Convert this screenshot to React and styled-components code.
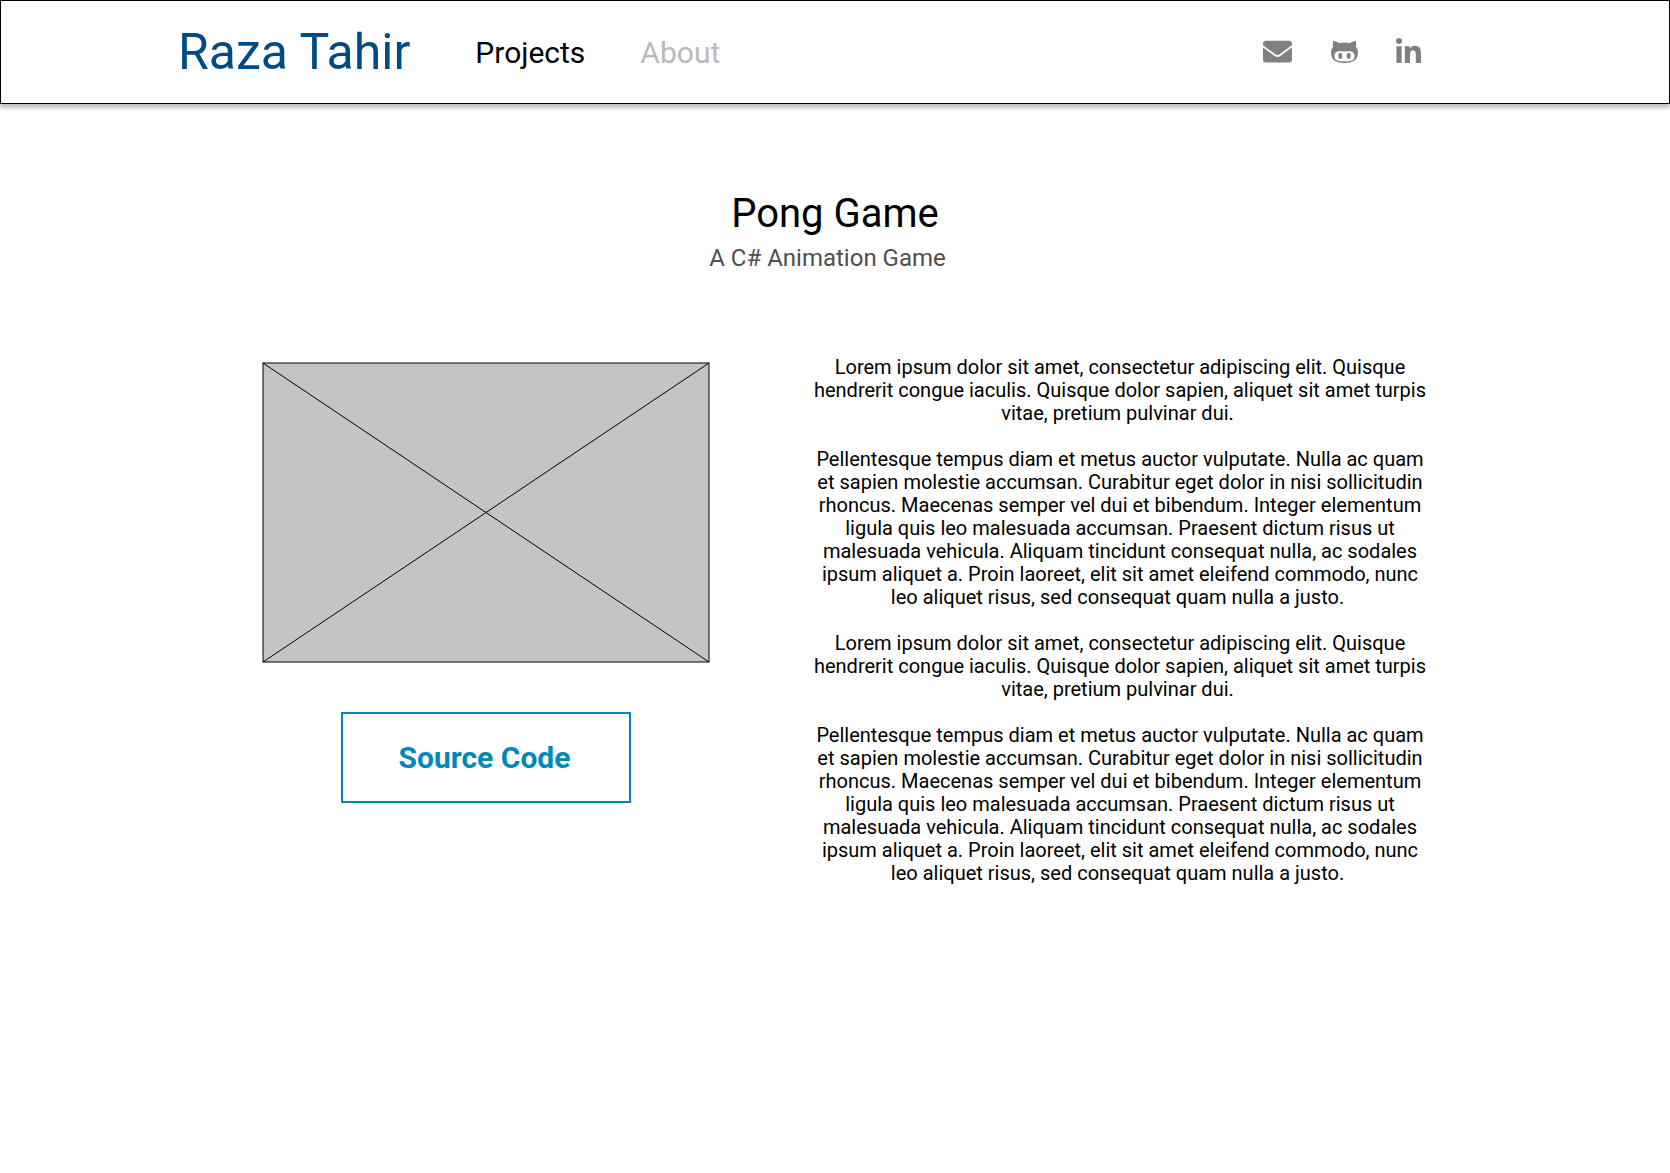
import React from "react";
import styled, { createGlobalStyle } from "styled-components";
import { FaEnvelope, FaLinkedinIn } from "react-icons/fa";

const GlobalStyle = createGlobalStyle`
  *, *::before, *::after { box-sizing: border-box; }
  body {
    margin: 0;
    background: #fff;
    color: #000;
    font-family: Roboto, "Liberation Sans", sans-serif;
  }
`;

const Page = styled.div`
  min-height: 1173px;
  background: #fff;
`;

const Header = styled.header`
  display: flex;
  align-items: center;
  height: 104px;
  padding: 0 246px 0 177px;
  border: 1px solid #000;
  background: #fff;
  box-shadow: 0 4px 4px rgba(0, 0, 0, 0.25);
`;

const Brand = styled.a`
  font-size: 50px;
  line-height: 59px;
  color: #004b84;
  white-space: nowrap;
`;

const Nav = styled.nav`
  display: flex;
  gap: 55px;
  margin-left: 65px;
`;

const NavLink = styled.a`
  font-size: 30px;
  line-height: 35px;
  color: ${({ $active }) => ($active ? "#000" : "#bababa")};
`;

const Social = styled.div`
  display: flex;
  align-items: flex-start;
  gap: 36px;
  height: 30px;
  margin-left: auto;
  color: #808080;
`;

const SocialLink = styled.a`
  display: flex;
  margin-top: ${({ $top = 0 }) => $top}px;
  svg {
    display: block;
    width: ${({ $w }) => $w}px;
    height: ${({ $h }) => $h}px;
  }
  &:first-child {
    margin-right: 3px;
  }
`;

const Intro = styled.section`
  display: flex;
  flex-direction: column;
  align-items: center;
  padding-top: 86px;
`;

const Title = styled.h1`
  margin: 0;
  font-size: 40px;
  font-weight: 400;
  line-height: 47px;
`;

const Subtitle = styled.p`
  margin: 7px 15px 0 0;
  font-size: 24px;
  line-height: 28px;
  color: #4f4f4f;
`;

const Content = styled.main`
  display: flex;
  align-items: flex-start;
  gap: 101px;
  padding: 84px 0 0 262px;
`;

const Media = styled.div`
  display: flex;
  flex-direction: column;
  align-items: center;
  gap: 49px;
  width: 448px;
  padding-top: 6px;
`;

const Placeholder = styled.svg`
  display: block;
  width: 448px;
  height: 301px;
`;

const SourceButton = styled.button`
  width: 290px;
  height: 91px;
  padding: 0 3px 0 0;
  border: 2px solid #0089b7;
  background: #fff;
  color: #0089b7;
  font: 700 30px/35px Roboto, "Liberation Sans", sans-serif;
`;

const Description = styled.div`
  width: 618px;
  font-size: 20px;
  line-height: 23px;
  text-align: center;
`;

const Paragraph = styled.p`
  margin: 0 0 23px;
`;

const Octoface = () => (
  <svg viewBox="0 2 16 13" preserveAspectRatio="none" fill="currentColor">
    <path
      fillRule="evenodd"
      d="M14.7 5.34c.13-.32.55-1.59-.13-3.31 0 0-1.05-.33-3.44 1.3-1-.28-2.07-.32-3.13-.32s-2.13.04-3.13.32c-2.39-1.64-3.44-1.3-3.44-1.3-.68 1.72-.26 2.99-.13 3.31C.49 6.21 0 7.33 0 8.69 0 13.84 3.33 15 7.98 15S16 13.84 16 8.69c0-1.36-.49-2.48-1.3-3.35zM8 14.02c-3.3 0-5.98-.15-5.98-3.35 0-.76.38-1.48 1.02-2.07 1.07-.98 2.9-.46 4.96-.46 2.07 0 3.88-.52 4.96.46.65.59 1.02 1.3 1.02 2.07 0 3.19-2.68 3.35-5.98 3.35zM5.49 9.01c-.66 0-1.2.8-1.2 1.78s.54 1.79 1.2 1.79c.66 0 1.2-.8 1.2-1.79s-.54-1.78-1.2-1.78zm5.02 0c-.66 0-1.2.79-1.2 1.78s.54 1.79 1.2 1.79c.66 0 1.2-.8 1.2-1.79s-.53-1.78-1.2-1.78z"
    />
  </svg>
);

const shortText =
  "Lorem ipsum dolor sit amet, consectetur adipiscing elit. Quisque hendrerit congue iaculis. Quisque dolor sapien, aliquet sit amet turpis vitae, pretium pulvinar dui.\u00a0";
const longText =
  "Pellentesque tempus diam et metus auctor vulputate. Nulla ac quam et sapien molestie accumsan. Curabitur eget dolor in nisi sollicitudin rhoncus. Maecenas semper vel dui et bibendum. Integer elementum ligula quis leo malesuada accumsan. Praesent dictum risus ut malesuada vehicula. Aliquam tincidunt consequat nulla, ac sodales ipsum aliquet a. Proin laoreet, elit sit amet eleifend commodo, nunc leo aliquet risus, sed consequat quam nulla a justo.\u00a0";
const paragraphs = [shortText, longText, shortText, longText];

export default function App() {
  return (
    <Page>
      <GlobalStyle />
      <Header>
        <Brand>Raza Tahir</Brand>
        <Nav>
          <NavLink $active>Projects</NavLink>
          <NavLink>About</NavLink>
        </Nav>
        <Social>
          <SocialLink $w={29} $h={29}><FaEnvelope /></SocialLink>
          <SocialLink $w={27} $h={22} $top={4}><Octoface /></SocialLink>
          <SocialLink $w={29} $h={28.5} $top={1}><FaLinkedinIn /></SocialLink>
        </Social>
      </Header>
      <Intro>
        <Title>Pong Game</Title>
        <Subtitle>A C# Animation Game</Subtitle>
      </Intro>
      <Content>
        <Media>
          <Placeholder viewBox="0 0 448 301">
            <rect x="1" y="1" width="446" height="299" fill="#c4c4c4" stroke="#000" />
            <path d="M1 1L447 300M447 1L1 300" stroke="#000" />
          </Placeholder>
          <SourceButton>Source Code</SourceButton>
        </Media>
        <Description>
          {paragraphs.map((text, i) => (
            <Paragraph key={i}>{text}</Paragraph>
          ))}
        </Description>
      </Content>
    </Page>
  );
}
